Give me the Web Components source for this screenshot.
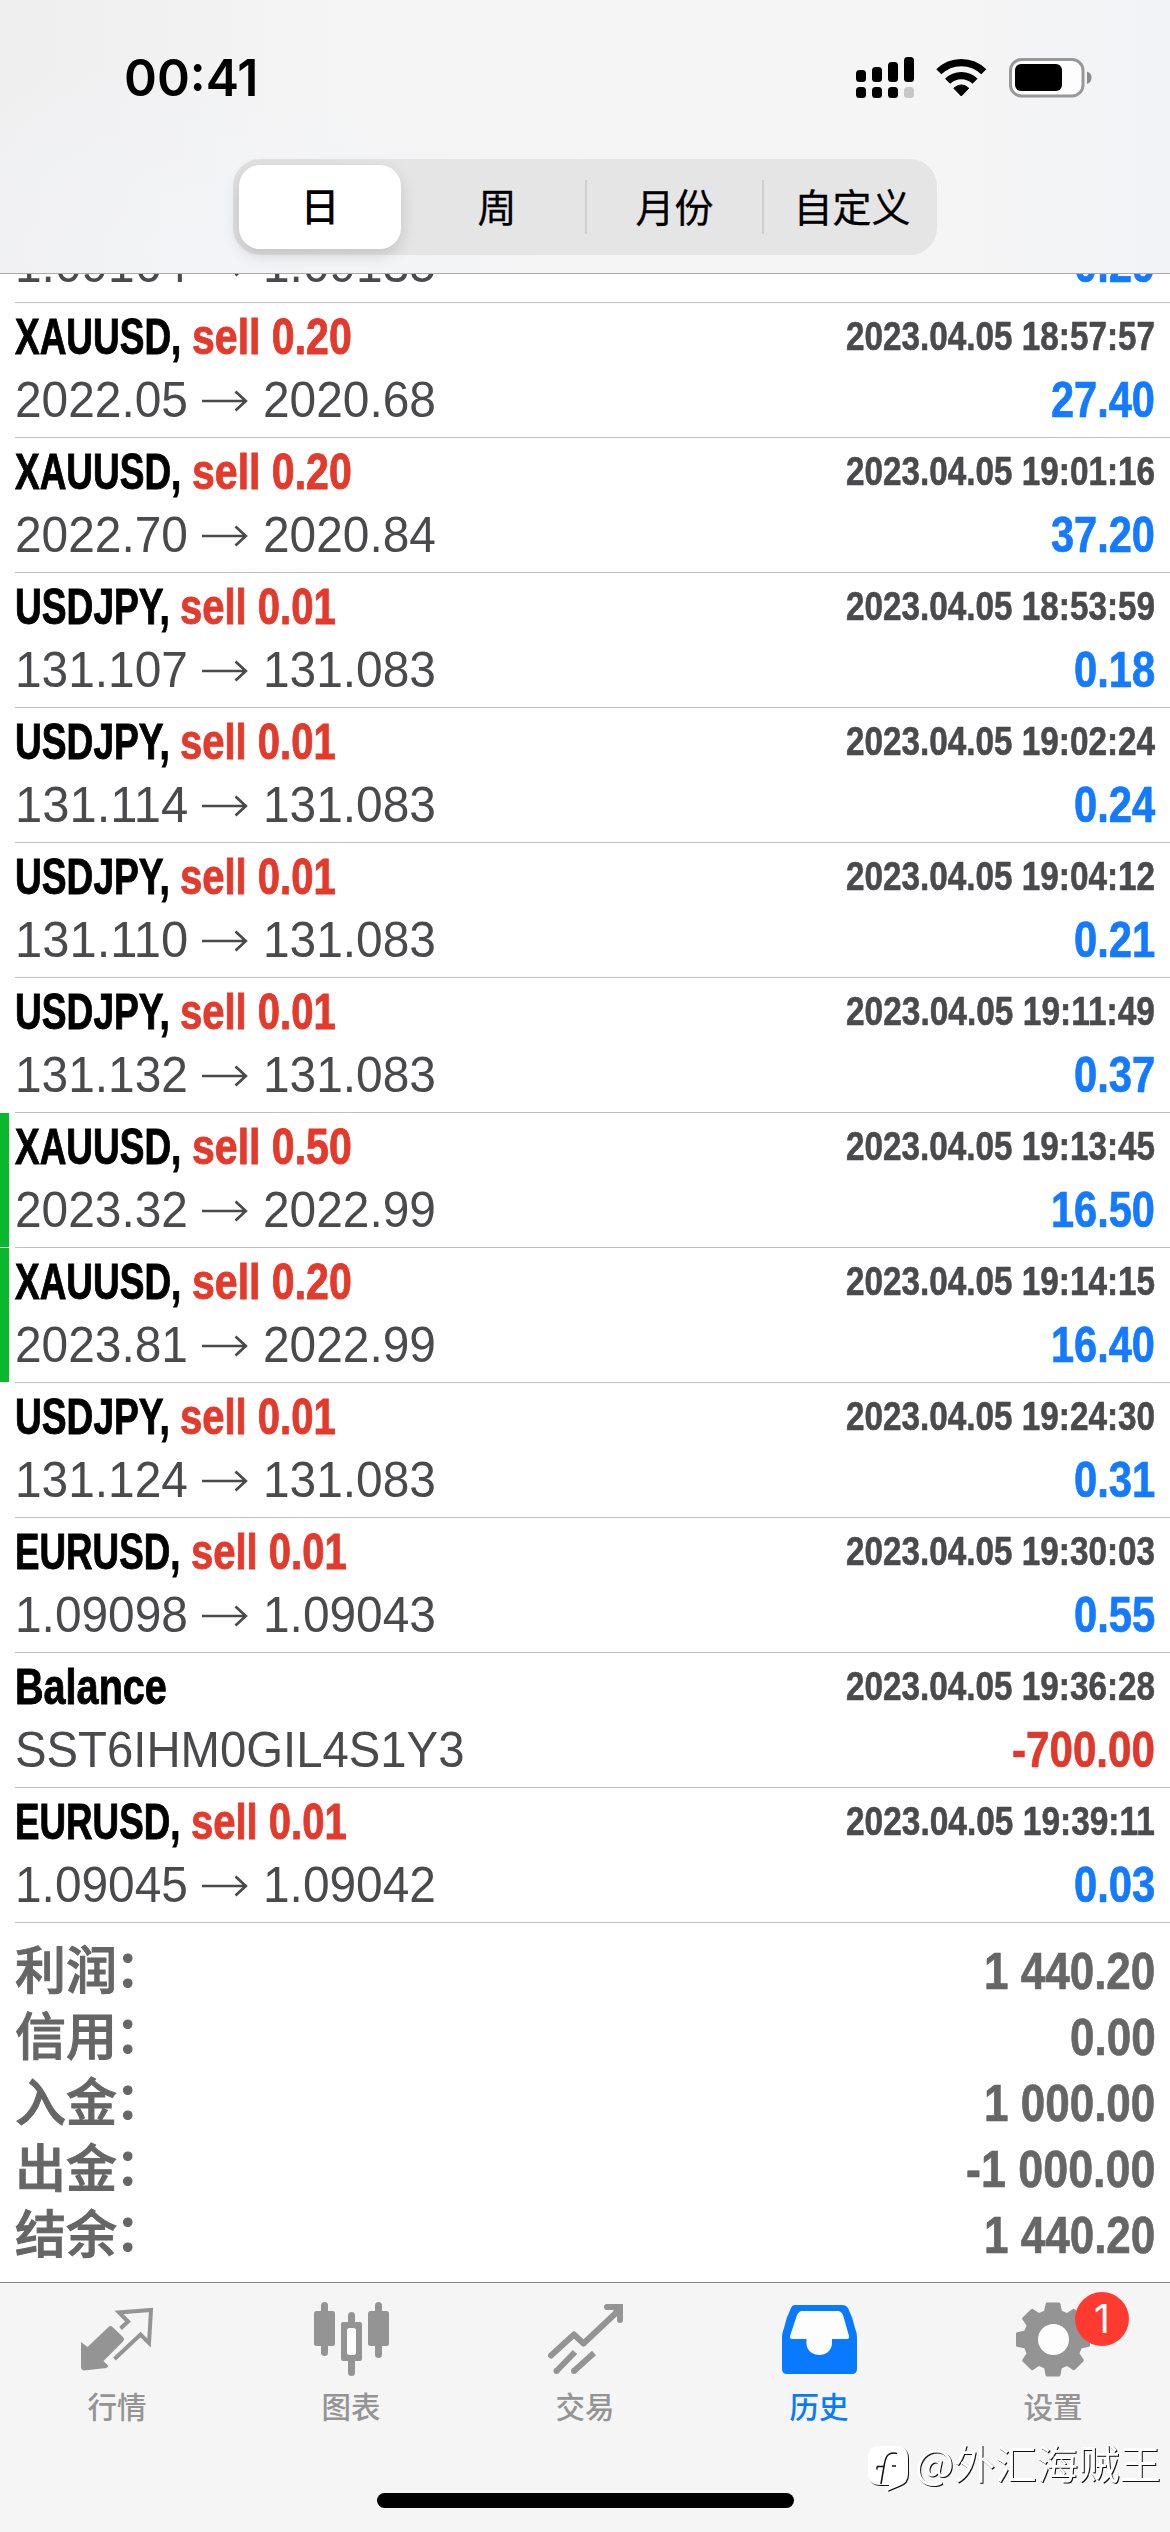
<!DOCTYPE html>
<html lang="zh-CN">
<head>
<meta charset="utf-8">
<title>历史</title>
<style>
html,body{margin:0;padding:0}
body{width:1170px;height:2532px;overflow:hidden;background:#fff;font-family:"Liberation Sans","Noto Sans CJK SC",sans-serif}
</style>
</head>
<body>
<history-screen></history-screen>
<script>
const NARROW = '"Liberation Sans Narrow","Liberation Sans","Noto Sans CJK SC",sans-serif';

function shadow(el, html){
  const root = el.attachShadow({mode:'open'});
  root.innerHTML = html;
  return root;
}

/* Text set to an exact advance width */
class FitText extends HTMLElement{
  connectedCallback(){
    if(this.shadowRoot) return;
    const w = +this.getAttribute('w');
    const root = shadow(this, `<style>
      :host{display:inline-block;width:${w}px;white-space:pre;flex:none;text-align:left}
      span{display:inline-block;transform-origin:0 50%}
    </style><span><slot></slot></span>`);
    const s = root.querySelector('span');
    s.style.transform = `scaleX(${w / s.offsetWidth})`;
  }
}
customElements.define('fit-text', FitText);

class StatusBar extends HTMLElement{
  connectedCallback(){
    shadow(this, `<style>
      :host{display:flex;height:159px;justify-content:space-between;box-sizing:border-box;padding:48px 78px 0 124px}
      .time{font:600 51px/60px Inter,sans-serif;color:#000}
      svg{display:block;margin-top:8px}
    </style>
    <div class="time"><fit-text w="134">00:41</fit-text></div>
    <svg width="236" height="44" viewBox="856 56 236 44">
      <g fill="#000">
        <rect x="856" y="70" width="10" height="12" rx="3.5"/><rect x="872" y="67" width="10" height="15" rx="3.5"/>
        <rect x="888" y="62" width="10" height="20" rx="3.5"/><rect x="904" y="57" width="10" height="25" rx="3.5"/>
        <rect x="856" y="87" width="10" height="11" rx="3.5"/><rect x="872" y="87" width="10" height="11" rx="3.5"/>
        <rect x="888" y="87" width="10" height="11" rx="3.5"/>
        <path d="M961.3 96 L953.8 88.2 Q961.3 81.6 968.8 88.2 Z" stroke="#000" stroke-width="1" stroke-linejoin="round"/>
      </g>
      <rect x="904" y="87" width="10" height="11" rx="3.5" fill="#c6c6c6"/>
      <g fill="none" stroke="#000" stroke-width="7.2">
        <path d="M938.8 71.8 A32 32 0 0 1 983.8 71.8"/>
        <path d="M947.6 81.2 A19.5 19.5 0 0 1 975 81.2"/>
      </g>
      <rect x="1010.5" y="59.5" width="72.5" height="36.5" rx="11" fill="#fdfdfd" stroke="#989899" stroke-width="3"/>
      <rect x="1015" y="64" width="47" height="27" rx="6" fill="#000"/>
      <path d="M1087 71.5 Q1091.5 73 1091.5 77.5 Q1091.5 82.5 1087 84 Z" fill="#8b8b8d"/>
    </svg>`);
  }
}
customElements.define('status-bar', StatusBar);

class SegmentedControl extends HTMLElement{
  connectedCallback(){
    const items = this.getAttribute('items').split(',');
    shadow(this, `<style>
      :host{display:flex;align-items:center;width:704px;height:96px;box-sizing:border-box;margin-left:233px;padding:0 0 0 6px;border-radius:27px;
        background:linear-gradient(90deg,#e0e0e1,#e5e5e6 25%,#e5e5e6);font:500 39px/56px "Noto Sans CJK SC",sans-serif;color:#000}
      .sel{flex:none;width:162px;height:84px;line-height:79px;text-align:center;background:#fff;border-radius:21px;box-shadow:0 6px 16px rgba(0,0,0,.14)}
      .seg{flex:none;box-sizing:border-box;width:177px;text-align:center;font-weight:400;line-height:50px;height:54px;border-right:2px solid #cfcfd1;-webkit-text-stroke:.3px}
      .sel + .seg{width:186px;padding-left:8px}
      .seg:last-child{width:173px;border:0;padding-left:3px}
    </style>` + items.map((t,i)=>`<div class="${i?'seg':'sel'}">${t}</div>`).join(''));
  }
}
customElements.define('segmented-control', SegmentedControl);

class NavHeader extends HTMLElement{
  connectedCallback(){
    shadow(this, `<style>
      :host{display:block;height:273px;border-bottom:1px solid #a9a9ab;background:radial-gradient(ellipse 420px 200px at 240px 250px,#f3f4f7,transparent),linear-gradient(90deg,#efeff0 0,#f0f0f1 8%,#f5f5f5 30%,#f5f5f5 80%,#f2f3f7 100%)}
    </style><slot></slot>`);
  }
}
customElements.define('nav-header', NavHeader);

const symbolWidth = {XAUUSD:177, USDJPY:165, EURUSD:176};
const numberWidth = (s,d,p,m) => [...s].reduce((n,c)=>n+(/\d/.test(c)?d:c==='-'?m:p),0);

class DealRow extends HTMLElement{
  connectedCallback(){
    const g = n => this.getAttribute(n);
    const sym = g('symbol'), vol = g('volume');
    const title = vol ? `<fit-text w="${symbolWidth[sym]}">${sym}, </fit-text><fit-text class="side" w="${vol==='0.01'?156:160}">sell ${vol}</fit-text>`
                      : `<fit-text w="152">${sym}</fit-text>`;
    const head = g('date') ? `<div class="title">${title}</div><div class="date"><fit-text w="309">${g('date')}</fit-text></div>` : '';
    const detail = g('note') ? `<fit-text w="449">${g('note')}</fit-text>`
      : `<fit-text w="173">${g('open')}</fit-text><svg width="46" height="22" viewBox="0 0 46 22"><path d="M0 11H43M33.5 1.5L43.8 11L33.5 20.5" fill="none" stroke="#4a4a4d" stroke-width="2.7"/></svg><fit-text w="173">${g('close')}</fit-text>`;
    const profit = g('profit');
    shadow(this, `<style>
      :host{display:flex;flex:none;height:135px;background:#fff}
      .mark{width:9px;height:134px;margin-right:6px;background:${this.hasAttribute('marked')?'#09b82c':'transparent'}}
      .body{flex:1;box-sizing:border-box;height:135px;border-bottom:1px solid #bfbfc1;padding:4px 15px 0 0}
      .line{display:flex;justify-content:space-between;height:60px}
      .line + .line{margin-top:3px}
      .title{font:700 49.5px/60px ${NARROW};color:#000;-webkit-text-stroke:.9px}
      .side{color:#e33a2c}
      .date{font:700 40.5px/58px ${NARROW};color:#4a4a4d;-webkit-text-stroke:.6px}
      .detail{display:flex;align-items:center;font:400 49.5px/60px "Liberation Sans",sans-serif;color:#4a4a4d}
      svg{margin:1px 15px 0 14px}
      .profit{font:700 49.5px/60px ${NARROW};color:${profit[0]==='-'?'#e0392b':'#147aff'};-webkit-text-stroke:.7px}
    </style>
    <div class="mark"></div>
    <div class="body">
      <div class="line">${head}</div>
      <div class="line"><div class="detail">${detail}</div><div class="profit"><fit-text w="${numberWidth(profit,23,12,16)}">${profit}</fit-text></div></div>
    </div>`);
  }
}
customElements.define('deal-row', DealRow);

class DealList extends HTMLElement{
  connectedCallback(){
    shadow(this, `<style>:host{display:flex;flex-direction:column;justify-content:flex-end;height:1649px;overflow:hidden}</style><slot></slot>`);
  }
}
customElements.define('deal-list', DealList);

class SummaryLine extends HTMLElement{
  connectedCallback(){
    const v = this.getAttribute('value');
    shadow(this, `<style>
      :host{display:flex;justify-content:space-between;height:66px;color:#666}
      .label{display:flex;font:500 51px/61px "Noto Sans CJK SC",sans-serif;-webkit-text-stroke:1px}
      .colon{line-height:56px;margin-left:-2px}
      .value{font:700 52.5px/66px ${NARROW};padding-top:1px;-webkit-text-stroke:.7px}
    </style><div class="label">${this.getAttribute('label')}<span class="colon">：</span></div><div class="value"><fit-text w="${numberWidth(v,24.4,12.3,18.5)}">${v}</fit-text></div>`);
  }
}
customElements.define('summary-line', SummaryLine);

class AccountSummary extends HTMLElement{
  connectedCallback(){
    shadow(this, `<style>:host{display:block;height:359px;box-sizing:border-box;padding:14px 15px 0 15px}</style><slot></slot>`);
  }
}
customElements.define('account-summary', AccountSummary);

const gear = (() => {
  const pts = [];
  for(let i=0;i<8;i++){
    for(const [da,r] of [[-15.5,28.5],[-9.5,36],[9.5,36],[15.5,28.5]]){
      const a = (i*45+da)*Math.PI/180;
      pts.push((1052+r*Math.sin(a)).toFixed(1)+' '+(2339.5-r*Math.cos(a)).toFixed(1));
    }
  }
  return 'M'+pts.join('L')+'Z';
})();

const icons = {
  quotes:`<svg viewBox="77 2296 78 84"><path d="M80 2342L86.5 2347L107.5 2327Q109.500 2325 111.500 2327L122 2337Q124 2339.500 122 2341.500L102.500 2361L107.500 2366L105.500 2368L83 2370.500Q80 2370 80 2367Z" fill="currentColor"/><path d="M119.500 2328.500L127 2321.500L118 2312.500L150 2310L148 2343L139.500 2334.500L113.500 2359" fill="none" stroke="currentColor" stroke-width="4"/></svg>`,
  chart:`<svg viewBox="311 2296 78 84"><g fill="currentColor"><rect x="313" y="2311" width="21" height="35" rx="2.500"/><rect x="320" y="2302" width="7" height="54" rx="3.500"/><rect x="367" y="2311" width="21" height="35" rx="2.500"/><rect x="374" y="2302" width="7" height="56" rx="3.500"/><rect x="347" y="2312" width="7" height="18" rx="3.500"/><rect x="347" y="2352" width="7" height="24" rx="3.500"/><path fill-rule="evenodd" d="M342 2322h17q2 0 2 2v35q0 2-2 2h-17q-2 0-2-2v-35q0-2 2-2zM349 2328q-3 0-3 3v21q0 3 3 3h3q3 0 3-3v-21q0-3-3-3z"/></g><rect x="346" y="2328" width="9" height="27" rx="3" fill="#fdfdfd"/></svg>`,
  trade:`<svg viewBox="545 2296 78 84"><g fill="none" stroke="currentColor" stroke-width="6"><path d="M550 2355.500L573 2334.500L582.500 2343.500L617 2311" stroke-linejoin="round" stroke-linecap="round"/><path d="M606 2307H619V2320" stroke-linecap="round"/><path d="M574 2352L555.500 2371M593 2353L573 2371"/></g><path d="M606 2304H622V2320L614 2312Z" fill="currentColor"/><g fill="currentColor"><circle cx="555.500" cy="2371" r="3"/><circle cx="573" cy="2371" r="3"/></g></svg>`,
  history:`<svg viewBox="779 2296 78 84"><path d="M794 2305H841Q845 2305 847 2308Q852 2318 854 2328Q856 2333 856 2337V2369Q856 2374 851 2374H786Q781 2374 781 2369V2337Q781 2333 783 2328Q785 2318 790 2308Q791 2305 794 2305Z" fill="currentColor"/><path d="M801 2311H837Q840 2311 842 2315L848 2336Q848.500 2339 846 2339H831V2344C830 2351 825 2355 818.500 2355S806 2351 805.500 2344V2339H791Q788.500 2339 789 2336L796 2315Q798 2311 801 2311Z" fill="#fdfdfd"/></svg>`,
  settings:`<svg viewBox="1013 2296 78 84"><path d="${gear}" fill="currentColor" stroke="currentColor" stroke-width="3" stroke-linejoin="round"/><circle cx="1052.500" cy="2339.500" r="15.500" fill="#fdfdfd"/></svg>`
};

class TabItem extends HTMLElement{
  connectedCallback(){
    const badge = this.getAttribute('badge');
    shadow(this, `<style>
      :host{display:flex;flex-direction:column;align-items:center;width:234px;box-sizing:border-box;padding-top:13px;position:relative;color:${this.hasAttribute('active')?'#087aff':'#949494'}}
      svg{display:block;width:78px;height:84px}
      .label{font:500 29.500px/40px "Noto Sans CJK SC",sans-serif;margin-top:5px}
      .badge{position:absolute;left:139px;top:9px;width:54px;height:54px;border-radius:27px;background:#ff3b30;color:#fff;font:400 39px/53px Inter,sans-serif;text-align:center}
    </style>${icons[this.getAttribute('icon')]}<div class="label"><slot></slot></div>${badge?`<div class="badge">${badge}</div>`:''}`);
  }
}
customElements.define('tab-item', TabItem);

class TabBar extends HTMLElement{
  connectedCallback(){
    shadow(this, `<style>
      :host{display:block;height:249px;border-top:1px solid #858587;background:#f5f5f5}
      .tabs{display:flex;height:210px}
      .home{width:417px;height:15px;border-radius:8px;background:#000;margin-left:377px}
    </style><div class="tabs"><slot></slot></div><div class="home"></div>`);
  }
}
customElements.define('tab-bar', TabBar);

class WaterMark extends HTMLElement{
  connectedCallback(){
    shadow(this, `<style>
      :host{position:absolute;left:867px;top:2437px;display:flex;align-items:flex-start;color:#fff;
        font:400 40px/50px "Noto Sans CJK SC",sans-serif;filter:drop-shadow(1px 1px 0 #111)}
      svg{display:block;margin:8px 6px 0 0}
    </style>
    <svg width="42" height="48" viewBox="0 0 42 48"><path d="M13 1H29Q41 1 41 13V29Q41 38 32 41L20 46L22 40H13Q1 40 1 28V13Q1 1 13 1Z" fill="#fff"/><path d="M30 8.500C22 6.500 19 10.500 17.500 18.500L14 39M10 21.500H17M25 21H29" fill="none" stroke="#111" stroke-width="1.500"/><path d="M10 21.500V24.500" stroke="#111" stroke-width="1.500"/></svg>
    <fit-text w="246"><slot></slot></fit-text>`);
  }
}
customElements.define('water-mark', WaterMark);

class HistoryScreen extends HTMLElement{
  connectedCallback(){
    const deals = [
      ['EURUSD','0.01','1.09164','1.09135','','0.29'],
      ['XAUUSD','0.20','2022.05','2020.68','18:57:57','27.40'],
      ['XAUUSD','0.20','2022.70','2020.84','19:01:16','37.20'],
      ['USDJPY','0.01','131.107','131.083','18:53:59','0.18'],
      ['USDJPY','0.01','131.114','131.083','19:02:24','0.24'],
      ['USDJPY','0.01','131.110','131.083','19:04:12','0.21'],
      ['USDJPY','0.01','131.132','131.083','19:11:49','0.37'],
      ['XAUUSD','0.50','2023.32','2022.99','19:13:45','16.50',1],
      ['XAUUSD','0.20','2023.81','2022.99','19:14:15','16.40',1],
      ['USDJPY','0.01','131.124','131.083','19:24:30','0.31'],
      ['EURUSD','0.01','1.09098','1.09043','19:30:03','0.55'],
      ['Balance','','','','19:36:28','-700.00',0,'SST6IHM0GIL4S1Y3'],
      ['EURUSD','0.01','1.09045','1.09042','19:39:11','0.03']
    ];
    const totals = [['利润','1 440.20'],['信用','0.00'],['入金','1 000.00'],['出金','-1 000.00'],['结余','1 440.20']];
    shadow(this, `<style>:host{display:flex;flex-direction:column;width:1170px;height:2532px;position:relative;overflow:hidden;background:#fff}</style>
    <nav-header><status-bar></status-bar><segmented-control items="日,周,月份,自定义"></segmented-control></nav-header>
    <deal-list>${deals.map(([s,v,o,c,t,p,m,n])=>`<deal-row symbol="${s}" volume="${v}" open="${o}" close="${c}" date="${t?'2023.04.05 '+t:''}" profit="${p}"${m?' marked':''}${n?` note="${n}"`:''}></deal-row>`).join('')}</deal-list>
    <account-summary>${totals.map(([l,v])=>`<summary-line label="${l}" value="${v}"></summary-line>`).join('')}</account-summary>
    <tab-bar>
      <tab-item icon="quotes">行情</tab-item><tab-item icon="chart">图表</tab-item><tab-item icon="trade">交易</tab-item>
      <tab-item icon="history" active>历史</tab-item><tab-item icon="settings" badge="1">设置</tab-item>
    </tab-bar>
    <water-mark>@外汇海贼王</water-mark>`);
  }
}
customElements.define('history-screen', HistoryScreen);
</script>
</body>
</html>
